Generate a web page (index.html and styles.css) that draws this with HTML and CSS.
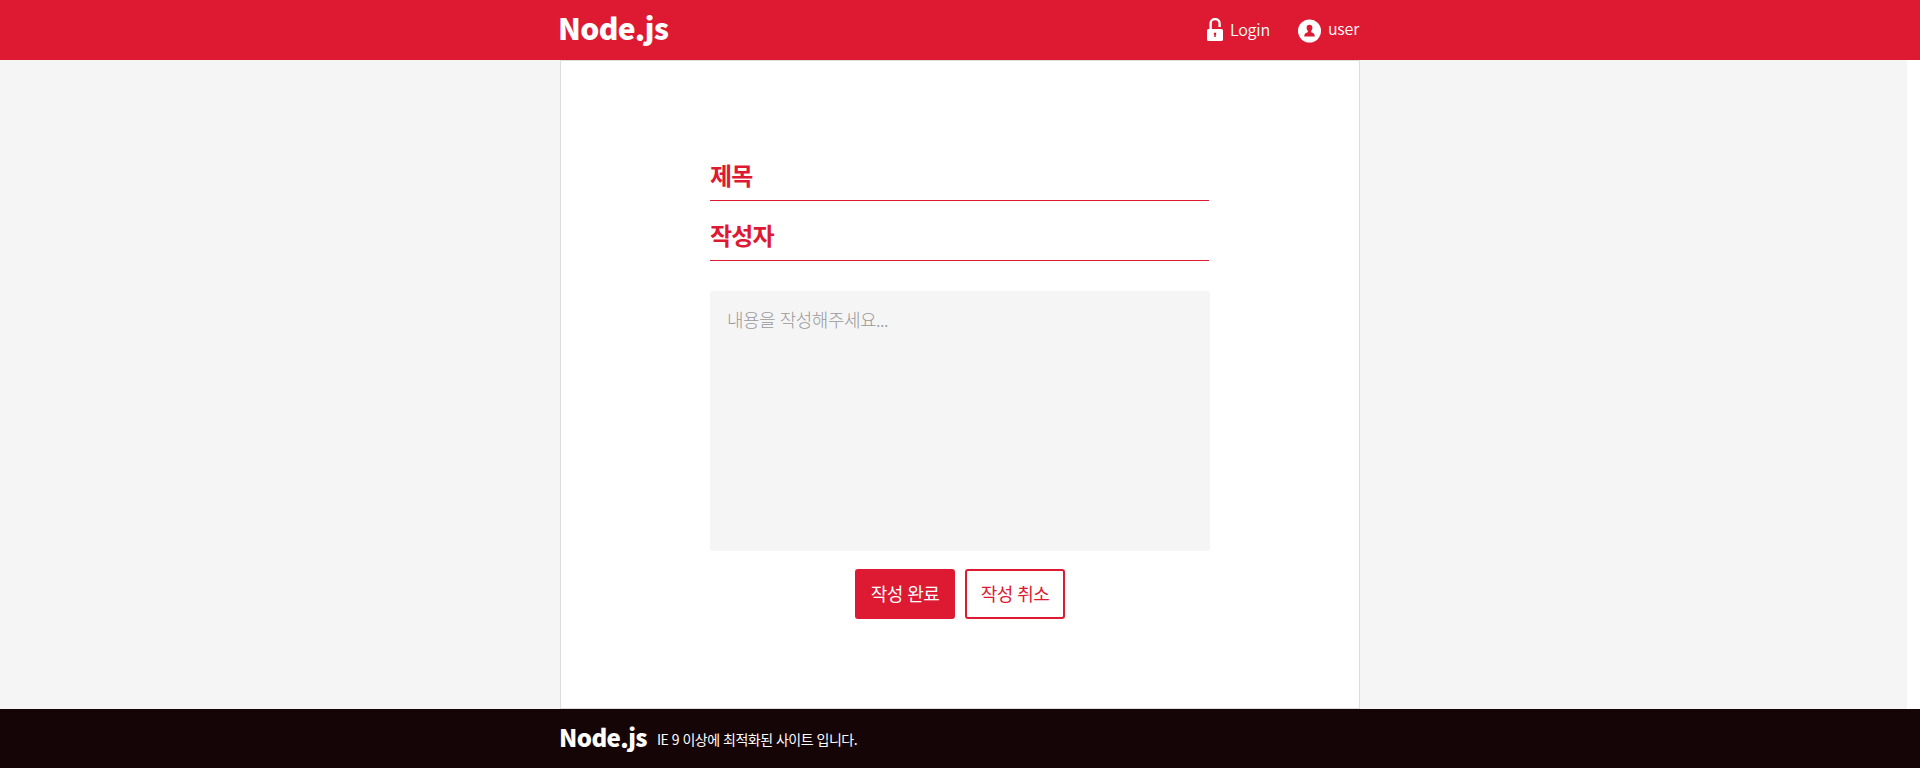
FILE: index.html
```html
<!DOCTYPE html>
<html lang="ko">
<head>
<meta charset="utf-8">
<title>Node.js</title>
<link rel="stylesheet" href="styles.css">
</head>
<body>
<header class="header">
  <div class="inner header-inner">
    <h1 class="logo">Node.js</h1>
    <nav class="nav">
      <a class="nav-item login">
        <svg width="16" height="23" viewBox="0 0 16 23"><path d="M3.600 12V5.600a4.500 4.500 0 0 1 9 0V9" fill="none" stroke="#fff" stroke-width="2.400"/><rect y="11" width="16" height="12" rx="1.600" fill="#fff"/><path d="M8 14.500a1.400 1.400 0 0 1 .8 2.500V19H7.300v-2A1.400 1.400 0 0 1 8 14.500z" fill="#dd1a32"/></svg>
        <span>Login</span>
      </a>
      <a class="nav-item user">
        <svg width="23" height="24" viewBox="0 0 23 24"><circle cx="11.500" cy="12" r="11.500" fill="#fff"/><path d="M11.500 5.800c2 0 2.900 1.300 2.900 3 0 1.300-.6 2.300-1.200 3v1.400c2 .6 3.600 1.600 3.600 4.200H6.200c0-2.600 1.600-3.600 3.600-4.200v-1.400c-.6-.7-1.200-1.700-1.200-3 0-1.700.9-3 2.900-3z" fill="#dd1a32"/></svg>
        <span>user</span>
      </a>
    </nav>
  </div>
</header>
<main class="page">
  <form class="content">
    <div class="field">제목</div>
    <div class="field">작성자</div>
    <div class="message">내용을 작성해주세요...</div>
    <div class="buttons">
      <button type="button" class="btn primary">작성 완료</button>
      <button type="button" class="btn">작성 취소</button>
    </div>
  </form>
</main>
<footer class="footer">
  <div class="inner footer-inner">
    <strong class="footer-logo">Node.js</strong>
    <p class="note">IE 9 이상에 최적화된 사이트 입니다.</p>
  </div>
</footer>
</body>
</html>
```
FILE: styles.css
```css
* { box-sizing: border-box; margin: 0; padding: 0; }
body { width: 1920px; height: 768px; overflow: hidden; background: #fff; font-family: "Noto Sans CJK KR", sans-serif; }
.inner { width: 800px; margin: 0 auto; display: flex; }
.header { height: 60px; background: #dd1a32; color: #fff; }
.header-inner { height: 60px; justify-content: space-between; }
.logo { font-size: 30px; line-height: 54px; font-weight: 900; letter-spacing: -0.7px; margin-left: -2px; }
.nav { display: flex; gap: 28px; padding-right: 1px; }
.nav-item { display: flex; font-size: 16px; font-weight: 350; letter-spacing: -0.2px; line-height: 58px; }
.login svg { margin: 18px 7px 0 0; }
.user { line-height: 56px; }
.user svg { margin: 19px 7px 0 0; }
.page { width: 1907px; height: 649px; background: #f5f5f5; padding-left: 560px; }
.content { width: 800px; height: 649px; padding: 90px 149px 0; background: #fff; border: 1px solid #ddd; }
.field { width: 499px; height: 50px; margin-bottom: 10px; border-bottom: 1px solid #dd1a32; color: #dd1a32; font-size: 24px; font-weight: 700; letter-spacing: -0.8px; line-height: 47px; }
.message { height: 260px; margin-top: 30px; padding: 16px 17px; background: #f5f5f5; border-radius: 3px; color: #999; font-size: 18px; line-height: 24px; font-weight: 300; letter-spacing: -0.5px; }
.buttons { display: flex; justify-content: center; gap: 10px; margin-top: 18px; }
.btn { width: 100px; height: 50px; padding-bottom: 2px; border: 2px solid #dd1a32; border-radius: 3px; background: #fff; color: #dd1a32; font: 400 18px "Noto Sans CJK KR", sans-serif; letter-spacing: -0.6px; }
.primary { background: #dd1a32; color: #fff; }
.footer { height: 59px; background: #160507; color: #fff; }
.footer-inner { gap: 10px; }
.footer-logo { font-size: 24px; font-weight: 900; line-height: 56px; letter-spacing: -0.6px; margin-left: -1px; }
.note { font-size: 14px; font-weight: 400; line-height: 60px; letter-spacing: -0.5px; }
```
